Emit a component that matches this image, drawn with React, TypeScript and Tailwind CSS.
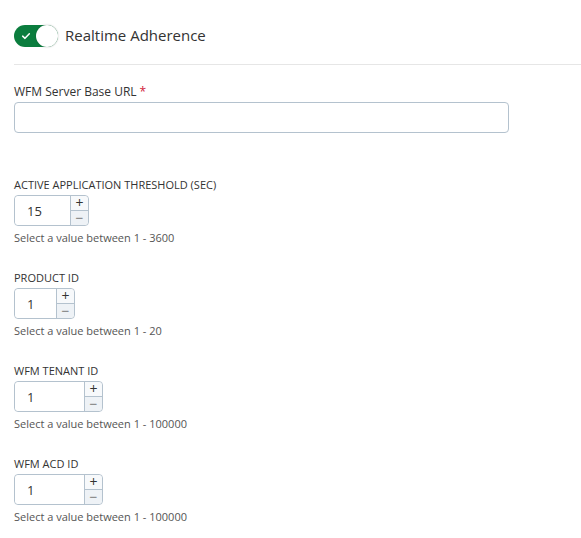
import { useState } from "react";

type NumberFieldProps = {
  label: string;
  value: number;
  min: number;
  max: number;
  inputWidth: string;
};

function NumberField({ label, value, min, max, inputWidth }: NumberFieldProps) {
  const [val, setVal] = useState(value);

  return (
    <div className="mb-[25px]">
      <div className="text-[11px] leading-[15px] text-[#333] uppercase">{label}</div>
      <div className="mt-[3px] flex h-[31px] w-fit rounded-[4px] border border-[#b4c2ce] bg-white">
        <input
          value={val}
          onChange={(e) => setVal(Number(e.target.value) || 0)}
          className={`${inputWidth} h-full rounded-l-[4px] bg-white pl-[12px] text-[13px] text-[#333] outline-none`}
        />
        <div className="flex w-[18px] flex-col border-l border-[#b4c2ce]">
          <button
            onClick={() => setVal(Math.min(max, val + 1))}
            className="flex flex-1 items-center justify-center rounded-tr-[4px] border-b border-[#b4c2ce] bg-[#f7f9fb] text-[14px] leading-none text-[#333]"
          >
            +
          </button>
          <button
            onClick={() => setVal(Math.max(min, val - 1))}
            className="flex flex-1 items-center justify-center rounded-br-[4px] bg-[#eef2f6] text-[14px] leading-none text-[#777]"
          >
            −
          </button>
        </div>
      </div>
      <div className="mt-[4px] text-[11px] leading-[15px] text-[#555]">
        Select a value between {min} - {max}
      </div>
    </div>
  );
}

function App() {
  const [enabled, setEnabled] = useState(true);

  return (
    <div className="min-h-screen bg-white pl-[14px] font-['Open_Sans',sans-serif] text-[#333]">
      <div className="flex h-[65px] items-center gap-[7px] border-b border-[#e6e6e6] pt-[7px]">
        <button
          onClick={() => setEnabled(!enabled)}
          className={`relative h-[22px] w-[44px] rounded-full ${enabled ? "bg-[#0b7d3e]" : "bg-[#c4c4c4]"}`}
        >
          {enabled && (
            <svg viewBox="0 0 12 12" className="absolute left-[7px] top-[6px] h-[10px] w-[10px]">
              <path d="M2 6.2 L4.8 8.8 L10 3.4" fill="none" stroke="white" strokeWidth="1.8" strokeLinecap="round" strokeLinejoin="round" />
            </svg>
          )}
          <span
            className={`absolute top-[0px] h-[22px] w-[22px] rounded-full bg-white shadow-[0_0_2px_rgba(0,0,0,0.25)] ${enabled ? "left-[22px]" : "left-0"}`}
          />
        </button>
        <span className="text-[15px] text-[#333]">Realtime Adherence</span>
      </div>

      <div className="mt-[19px] text-[12px] leading-[16px] text-[#333]">
        WFM Server Base URL<span className="ml-[3px] text-[#d11a3a]">*</span>
      </div>
      <input className="mt-[2px] h-[31px] w-[495px] rounded-[4px] border border-[#b4c2ce] bg-white px-[10px] text-[13px] outline-none" />

      <div className="mt-[44px]">
        <NumberField label="Active Application Threshold (sec)" value={15} min={1} max={3600} inputWidth="w-[55px]" />
        <NumberField label="Product ID" value={1} min={1} max={20} inputWidth="w-[41px]" />
        <NumberField label="WFM Tenant ID" value={1} min={1} max={100000} inputWidth="w-[69px]" />
        <NumberField label="WFM ACD ID" value={1} min={1} max={100000} inputWidth="w-[69px]" />
      </div>
    </div>
  );
}

export default App;
